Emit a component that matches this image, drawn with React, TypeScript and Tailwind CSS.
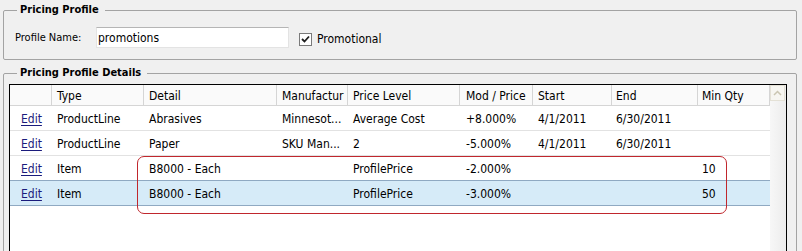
import React from 'react';

const FONT = { fontFamily: '"DejaVu Sans Condensed", "Liberation Sans", sans-serif' };

// column widths include the 1px header separator on the right
const COLS = [
  { label: '', cls: 'w-[42px] pl-[11px]' },
  { label: 'Type', cls: 'w-[92px] pl-[5px]' },
  { label: 'Detail', cls: 'w-[133px] pl-[5px]' },
  { label: 'Manufactur', cls: 'w-[71px] pl-[5px]' },
  { label: 'Price Level', cls: 'w-[112px] pl-[5px]' },
  { label: 'Mod / Price', cls: 'w-[73px] pl-[6px]' },
  { label: 'Start', cls: 'w-[79px] pl-[5px]' },
  { label: 'End', cls: 'w-[86px] pl-[4px]' },
  { label: 'Min Qty', cls: 'w-[72px] pl-[4px]' },
];

const ROWS: { cells: string[]; selected?: boolean; nextSelected?: boolean }[] = [
  { cells: ['Edit', 'ProductLine', 'Abrasives', 'Minnesot...', 'Average Cost', '+8.000%', '4/1/2011', '6/30/2011', ''] },
  { cells: ['Edit', 'ProductLine', 'Paper', 'SKU Man...', '2', '-5.000%', '4/1/2011', '6/30/2011', ''] },
  { cells: ['Edit', 'Item', 'B8000 - Each', '', 'ProfilePrice', '-2.000%', '', '', '10'], nextSelected: true },
  { cells: ['Edit', 'Item', 'B8000 - Each', '', 'ProfilePrice', '-3.000%', '', '', '50'], selected: true },
];

function Checkbox() {
  return (
    <span className="w-[13px] h-[13px] border border-[#7a7a7a] bg-white grid place-items-center">
      <svg width="9" height="9" viewBox="0 0 9 9">
        <path d="M1 4 L3.5 6.5 L8 1.5" stroke="#1e1e1e" strokeWidth="1.8" fill="none" />
      </svg>
    </span>
  );
}

export default function App() {
  return (
    <div className="relative w-[802px] h-[251px] overflow-hidden bg-[#f0f0f0] text-black" style={FONT}>
      {/* Pricing Profile group */}
      <fieldset className="mx-[3px] mr-[5px] h-[60px] border border-[#a3a3a3] rounded-[2px]">
        <legend className="ml-[13px] pl-[3px] pr-[6px] h-[20px] leading-[20px] text-[11px] font-bold">
          Pricing Profile
        </legend>
        <div className="flex items-center mt-[7px] h-[21px] pl-[11px] text-[11px]">
          <span className="w-[81px] pt-[1px]">Profile Name:</span>
          <div className="w-[193px] h-[21px] bg-white border border-[#e3e3e3] border-t-[#b5b5b5] flex items-center pl-[1px] text-[12px]">
            promotions
          </div>
          <label className="flex items-center gap-[5px] ml-[10px] mt-[3px] text-[12px]">
            <Checkbox />
            <span>Promotional</span>
          </label>
        </div>
      </fieldset>

      {/* Pricing Profile Details group */}
      <fieldset className="mt-[3px] mx-[3px] mr-[5px] h-[260px] border border-[#a3a3a3] rounded-[2px]">
        <legend className="ml-[13px] pl-[3px] pr-[6px] h-[20px] leading-[20px] text-[11px] font-bold">
          Pricing Profile Details
        </legend>
        <div className="mt-[1px] ml-[5px] w-[778px] h-[200px] border border-black bg-white flex text-[12px]">
          <div className="w-[760px] flex flex-col">
            {/* header */}
            <div className="flex h-[21px] bg-[#fafafa] border-b border-[#d5d5d5]">
              {COLS.map((c, i) => (
                <div
                  key={i}
                  className={`${c.cls} shrink-0 border-r border-[#d5d5d5] flex items-center pt-[1px] overflow-hidden whitespace-nowrap`}
                >
                  {c.label}
                </div>
              ))}
            </div>
            {ROWS.map((r, ri) => (
              <div
                key={ri}
                className={`flex h-[25px] border-b ${
                  r.selected ? 'bg-[#d6ebf8] border-[#8fa9c2]' : r.nextSelected ? 'border-[#8fa9c2]' : 'border-[#e2e2e2]'
                }`}
              >
                {COLS.map((c, ci) => (
                  <div key={ci} className={`${c.cls} shrink-0 flex items-center pt-[1px] overflow-hidden whitespace-nowrap`}>
                    {ci === 0 ? (
                      <span className="text-[#1b1b7c] underline underline-offset-[2px]">{r.cells[ci]}</span>
                    ) : (
                      r.cells[ci]
                    )}
                  </div>
                ))}
              </div>
            ))}
          </div>
          {/* vertical scrollbar */}
          <div className="w-[16px] flex flex-col bg-gradient-to-r from-[#f7f7f7] to-[#ececec]">
            <div className="h-[16px] w-[15px] border border-[#e4e1d6] bg-[#f7f6f1] grid place-items-center">
              <svg width="9" height="6" viewBox="0 0 9 6">
                <path d="M1 5 L4.5 1.5 L8 5" stroke="#cbc6b2" strokeWidth="1.5" fill="none" />
              </svg>
            </div>
          </div>
        </div>
      </fieldset>

      {/* annotation highlight */}
      <div className="absolute left-[137px] top-[156px] w-[590px] h-[58px] border border-[#c0272d] rounded-[7px] pointer-events-none" />
    </div>
  );
}
